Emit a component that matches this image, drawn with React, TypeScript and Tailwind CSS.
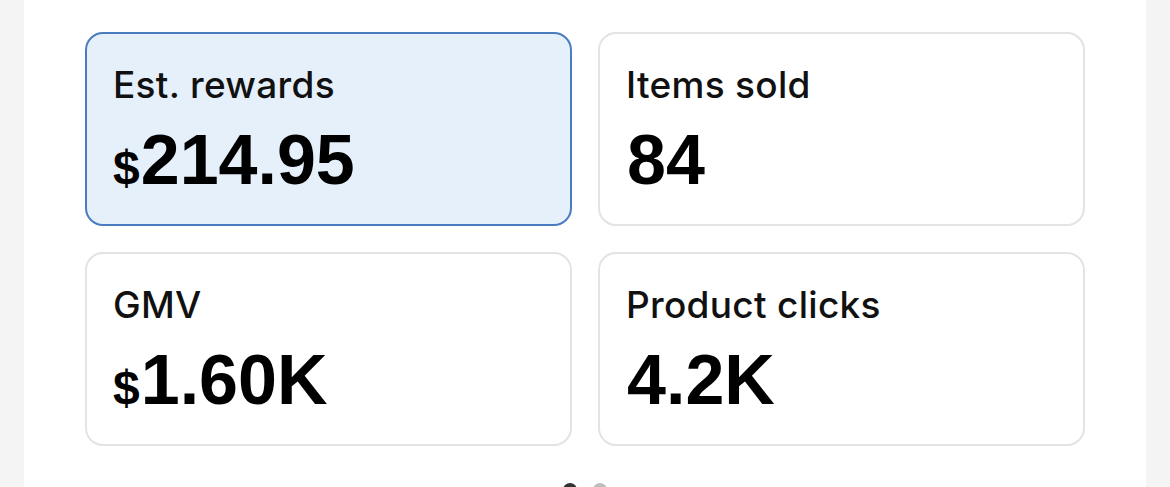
import React from "react";

type Card = { label: string; prefix?: string; value: string; active?: boolean };

const cards: Card[] = [
  { label: "Est. rewards", prefix: "$", value: "214.95", active: true },
  { label: "Items sold", value: "84" },
  { label: "GMV", prefix: "$", value: "1.60K" },
  { label: "Product clicks", value: "4.2K" },
];

export default function App() {
  return (
    <div className="w-[1170px] h-[487px] bg-[#f4f4f4] overflow-hidden flex">
      <div className="ml-[24px] w-[1122px] h-full bg-white flex flex-col items-center">
        <div className="grid grid-cols-2 gap-[26px] mt-[32px] w-[1000px]">
          {cards.map((c) => (
            <div
              key={c.label}
              className={
                c.active
                  ? "h-[194px] rounded-[18px] border-2 border-[#4a7cc0] bg-[#e6f0fa] pt-[28px] px-[26px]"
                  : "h-[194px] rounded-[18px] border-2 border-[#e3e3e3] bg-white pt-[28px] px-[26px]"
              }
            >
              <div
                className="text-[37px] leading-[45px] font-medium text-[#111] tracking-[0.3px]"
                style={{ fontFamily: "Inter, 'Noto Sans', sans-serif" }}
              >
                {c.label}
              </div>
              <div
                className="mt-[19px] leading-[68px] font-bold text-black flex items-baseline"
                style={{ fontFamily: "'Liberation Sans', Arial, sans-serif" }}
              >
                {c.prefix && <span className="text-[48px]">{c.prefix}</span>}
                <span className="text-[70px] ml-[1px]">{c.value}</span>
              </div>
            </div>
          ))}
        </div>
        <div className="mt-[37px] flex gap-[16px]">
          <div className="w-[14px] h-[14px] rounded-full bg-[#333]" />
          <div className="w-[14px] h-[14px] rounded-full bg-[#bdbdbd]" />
        </div>
      </div>
      <div className="flex-1" />
    </div>
  );
}
